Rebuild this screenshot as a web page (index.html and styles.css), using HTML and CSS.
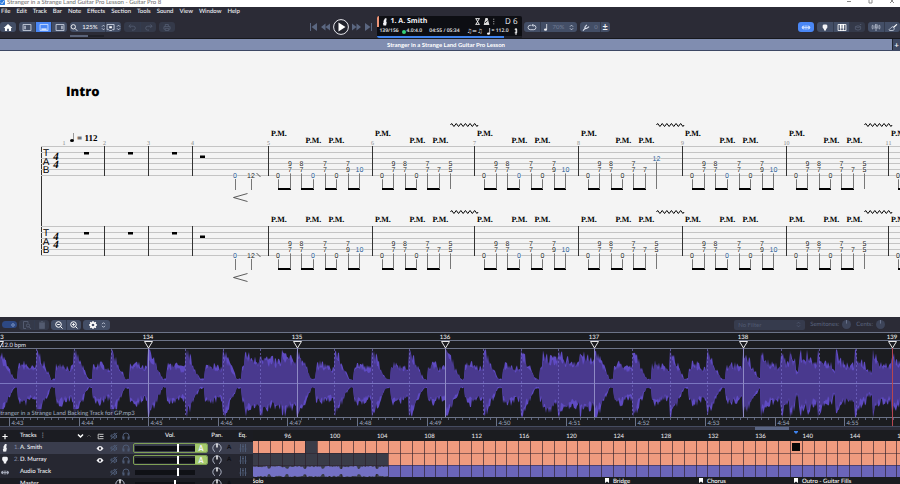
FILE: index.html
```html
<!DOCTYPE html>
<html lang="en">
<head>
<meta charset="utf-8">
<title>Stranger in a Strange Land Guitar Pro Lesson - Guitar Pro 8</title>
<link rel="stylesheet" href="styles.css">
</head>
<body>
<svg class="defs" aria-hidden="true">
  <symbol id="updown" viewBox="0 0 6 8"><path d="M1.200 3 3 1.200 4.800 3M1.200 5 3 6.800 4.800 5" fill="none" stroke="currentColor"/></symbol>
  <symbol id="mute" viewBox="0 0 8 8"><path d="M1 3h1.600L5 1v6L2.600 5H1zM.8 7.400 7 .8M6.500 3v3" fill="none" stroke="currentColor"/></symbol>
  <symbol id="phones" viewBox="0 0 8 8"><path d="M1 6V4a3 3 0 0 1 6 0v2" fill="none" stroke="currentColor"/><path d="M.5 4.500h2v3h-2zM5.500 4.500h2v3h-2z" fill="currentColor"/></symbol>
  <symbol id="eye" viewBox="0 0 8 8"><path d="M0 4q4-5.500 8 0-4 5.500-8 0z" fill="currentColor"/><circle cx="4" cy="4" r="1.300" fill="#2b2b36"/></symbol>
  <symbol id="knob" viewBox="0 0 10 10"><path d="M3 8.700A4.200 4.200 0 1 1 7 8.700" fill="none" stroke="currentColor"/><path d="M5 .5v4" stroke="#fff" stroke-width="1.400"/></symbol>
  <symbol id="eq" viewBox="0 0 8 8"><path d="M1.500 0v8M4 0v8M6.500 0v8M.5 5h2M3 2.500h2M5.500 5h2" fill="none" stroke="currentColor"/></symbol>
  <symbol id="guitar" viewBox="0 0 8 10"><path d="M4 0h2v2L5.500 4l.8 1.500L5.500 9.500 2 9.800 1.300 7l.9-1.500L2 3.500z" fill="currentColor"/></symbol>
  <symbol id="pick" viewBox="0 0 8 10"><path d="M2 .8h4L7.500 2v3L5.500 7.500V9.300h-3V7.500L.5 5V2z" fill="currentColor"/></symbol>
  <symbol id="wave" viewBox="0 0 10 8"><path d="M0 4l2-2v4zM10 4 8 2v4zM2 4h6M4 1.500v5M6 1.500v5" fill="currentColor" stroke="currentColor" stroke-width=".9"/></symbol>
  <symbol id="note" viewBox="0 0 6 9"><path d="M4.500 0v7" stroke="currentColor"/><ellipse cx="3" cy="7.300" rx="2" ry="1.400" fill="currentColor"/></symbol>
</svg>

<div class="titlebar">
  <svg class="app-icon" viewBox="0 0 6 6"><rect width="6" height="6" rx="1" fill="#2f7de0"/><path d="M1 3l1.500 1.500L5 1" stroke="#fff" fill="none"/></svg>
  <span>Stranger in a Strange Land Guitar Pro Lesson - Guitar Pro 8</span>
  <svg class="window-buttons" viewBox="0 0 48 6"><path d="M0 1.500h4M22 0v3h3V0M43 3l4-4M47 3l-4-4" fill="none" stroke="#8a8a8a"/></svg>
</div>

<header class="top">
  <nav class="menu">
    <a href="#">File</a><a href="#">Edit</a><a href="#">Track</a><a href="#">Bar</a><a href="#">Note</a><a href="#">Effects</a><a href="#">Section</a><a href="#">Tools</a><a href="#">Sound</a><a href="#">View</a><a href="#">Window</a><a href="#">Help</a>
  </nav>
  <div class="toolbar">
    <div class="side">
      <div class="group"><button class="home" aria-label="Home"><svg viewBox="0 0 10 8"><path d="M5 0 10 4.500H8.500V8H6V5.500H4V8H1.500V4.500H0z" fill="#fff"/></svg></button></div>
      <div class="group">
        <button aria-label="Left panel"><svg viewBox="0 0 10 8"><path d="M.5 .5h9v7h-9z" fill="none" stroke="#cfd6e4"/><path d="M2 2h1.500v4H2z" fill="#cfd6e4"/></svg></button>
        <button class="on" aria-label="Bottom panel"><svg viewBox="0 0 10 8"><path d="M.5 .5h9v7h-9z" fill="none" stroke="#cfe0ff"/><path d="M2 5h6v1.500H2z" fill="#fff"/></svg></button>
        <button aria-label="Right panel"><svg viewBox="0 0 10 8"><path d="M.5 .5h9v7h-9z" fill="none" stroke="#cfd6e4"/><path d="M6.500 2H8v4H6.500z" fill="#cfd6e4"/></svg></button>
      </div>
      <div class="zoom">
        <div class="group">
          <button class="zoom-value"><svg viewBox="0 0 8 8"><circle cx="3.200" cy="3.200" r="2.500" fill="none" stroke="#fff"/><path d="m5 5 2.700 2.700" stroke="#fff"/></svg>125%<svg class="arrows"><use href="#updown"/></svg></button>
          <button aria-label="Display mode"><svg viewBox="0 0 10 8"><path d="M2.500 6.500H.5v-6h8v6h-2M3 7.500h3" fill="none" stroke="#cfd6e4"/><path d="M3 2.500h3v2.300H3z" fill="#fff"/></svg><svg class="arrows"><use href="#updown"/></svg></button>
        </div>
        <progress value="54" max="100" aria-label="Loading"></progress>
      </div>
      <div class="group off">
        <button aria-label="Undo"><svg viewBox="0 0 10 8"><path d="M3.500 .5 1.500 2.500l2 2M1.500 2.500h5a2.200 2.200 0 0 1 0 4.500H5" fill="none" stroke="currentColor"/></svg></button>
        <button aria-label="Redo"><svg viewBox="0 0 10 8"><path d="m6.500 .5 2 2-2 2M8.500 2.500h-5a2.200 2.200 0 0 0 0 4.500H5" fill="none" stroke="currentColor"/></svg></button>
      </div>
      <div class="group off"><button aria-label="Print"><svg viewBox="0 0 10 8"><path d="M3 3V.5h3.500V3M2.500 6h-1V3h7v3h-1M3 5h4v2.500H3z" fill="none" stroke="currentColor"/></svg></button></div>
      <div class="transport">
        <button aria-label="First bar"><svg viewBox="0 0 8 8"><path d="M.5 0v8" stroke="currentColor"/><path d="M7 0v8L1.500 4z" fill="currentColor"/></svg></button>
        <button aria-label="Previous bar"><svg class="wide" viewBox="0 0 10 8"><path d="M5 0v8L0 4zM10 0v8L5 4z" fill="currentColor"/></svg></button>
        <button aria-label="Play"><svg class="play" viewBox="0 0 16 16"><circle cx="8" cy="8" r="7.400" fill="#22232d" stroke="#e8e8ee"/><path d="M5.500 3.500v9L12.500 8z" fill="#fff"/></svg></button>
        <button aria-label="Next bar"><svg class="wide" viewBox="0 0 10 8"><path d="M0 0v8l5-4zM5 0v8l5-4z" fill="currentColor"/></svg></button>
        <button aria-label="Last bar"><svg viewBox="0 0 8 8"><path d="M7.500 0v8" stroke="currentColor"/><path d="M1 0v8l5.500-4z" fill="currentColor"/></svg></button>
      </div>
    </div>

    <div class="display">
      <div class="now">
        <svg class="mini"><use href="#guitar"/></svg>
        <strong>1. A. Smith</strong>
        <svg class="flags" viewBox="0 0 24 8"><path d="M1 .7h5M1 7.300h5M1.700 1l3.500 6M5.300 1 1.800 7" fill="none" stroke="#fff"/><path d="M12.500 0h2.500L17 8h-6.500zM11.500 5h5" fill="#ddd"/><path d="M12 5.500 15 3" stroke="#111"/><path d="M22 .8v1.300M22 3.400v1.300M22 6v1.300" stroke="#bbb"/></svg>
        <span class="key">D 6</span>
      </div>
      <div class="status">
        <span>139/156</span><svg class="dot" viewBox="0 0 4 4"><circle cx="2" cy="2" r="2" fill="#35d07a"/></svg><span>4.0:4.0</span>
        <span class="time">04:55 / 05:34</span>
        <span class="music">♫=♫</span><svg class="mini-note"><use href="#note"/></svg><span>= 112.0</span>
        <svg class="fork" viewBox="0 0 4 8"><path d="M2 0v8M.5 1.500h2.500M.5 5.500H3M2.800 1.500v4" stroke="#fff" fill="none"/></svg>
      </div>
      <progress value="88" max="100" aria-label="Song position"></progress>
    </div>

    <div class="side options">
      <div class="group">
        <button aria-label="Loop"><svg viewBox="0 0 10 8"><path d="M4 1.500H3a2.500 2.500 0 0 0 0 5h4a2.500 2.500 0 0 0 0-5H5M6.500 0 5 1.500 6.500 3" fill="none" stroke="#dde2ee"/></svg></button>
        <button class="tempo"><svg class="mini-note"><use href="#note"/></svg><span class="dim">70%</span><svg class="arrows"><use href="#updown"/></svg></button>
      </div>
      <div class="group">
        <button class="tune"><svg viewBox="0 0 8 8"><path d="M.5 7.500 3 5M3 5q-1-1.500 2-4M3 5q1.500 1 4.500-2" fill="none" stroke="#dde2ee" stroke-width="1.300"/></svg><span class="dim">0</span></button>
        <button class="step" aria-label="Transpose">±</button>
      </div>
      <div class="group push"><button class="on" aria-label="Audio"><svg viewBox="0 0 10 8" class="pale"><use href="#wave"/></svg></button></div>
      <div class="group">
        <button aria-label="Fretboard"><svg viewBox="0 0 8 10"><use href="#pick"/></svg></button>
        <button aria-label="Keyboard"><svg viewBox="0 0 10 8"><path d="M.5 .5h9v7h-9zM3.500 4v4M6.500 4v4" fill="none" stroke="#fff"/><path d="M2.500 0h2v5h-2zM5.500 0h2v5h-2z" fill="#fff"/></svg></button>
        <button class="disabled" aria-label="Drums"><svg viewBox="0 0 10 8"><path d="M2 3v3q3 2 6 0V3q-3 2-6 0q3-2 6 0M7 1l2-1" fill="none" stroke="currentColor"/></svg></button>
      </div>
      <div class="group">
        <button aria-label="Tuner"><svg viewBox="0 0 10 8"><path d="M1 1q-1 2.500 0 5M2.700 1.500v4M7.300 1.500v4M9 1q1 2.500 0 5M4.500 0v4.500h1.500V0M5 4.500V8" fill="none" stroke="#cfd6e4" stroke-width=".8"/></svg></button>
        <button aria-label="Guitar"><svg viewBox="0 0 10 8"><path d="M9.500 .3 5.500 4" stroke="#fff" stroke-width="1.200"/><path d="M6 4q1.500 3-2 3.500-4 .5-3.500-1Q1.500 5.500 3 4q2-2 3 0z" fill="none" stroke="#cfd6e4"/></svg></button>
      </div>
    </div>
  </div>
</header>

<div class="tabs"><button class="tab">Stranger in a Strange Land Guitar Pro Lesson</button><button class="new-tab" aria-label="New tab">+</button></div>

<main class="score"><svg id="score" role="img" aria-label="Tablature"></svg></main>

<section class="audio">
  <div class="audio-bar">
    <input class="switch" type="checkbox" checked disabled aria-label="Audio track enabled">
    <div class="group off">
      <button aria-label="Replace audio"><svg viewBox="0 0 10 8"><path d="M4 7.500H1.500v-7H6V2" fill="none" stroke="currentColor"/><circle cx="6" cy="4.500" r="1.600" fill="none" stroke="currentColor"/><path d="M7 5.700 9 8" stroke="currentColor"/></svg></button>
      <button aria-label="Delete audio"><svg viewBox="0 0 10 8"><path d="M2.500 2h5v5.500h-5zM2 1.200h6M4 .5h2" fill="currentColor" stroke="currentColor" stroke-width=".7"/></svg></button>
    </div>
    <div class="group">
      <button aria-label="Zoom out"><svg viewBox="0 0 8 8"><circle cx="3.500" cy="3.500" r="2.800" fill="none" stroke="#fff"/><path d="m5.500 5.500 2 2M2.200 3.500h2.600" stroke="#fff"/></svg></button>
      <button aria-label="Zoom in"><svg viewBox="0 0 8 8"><circle cx="3.500" cy="3.500" r="2.800" fill="none" stroke="#fff"/><path d="m5.500 5.500 2 2M2.200 3.500h2.600M3.500 2.200v2.600" stroke="#fff"/></svg></button>
    </div>
    <div class="group">
      <button class="gear" aria-label="Audio settings"><svg viewBox="0 0 8 8"><circle cx="4" cy="4" r="2.200" fill="none" stroke="#fff" stroke-width="1.700"/><path d="M4 0v1.500M4 6.500V8M0 4h1.500M6.500 4H8M1.200 1.200l1 1M5.800 5.800l1 1M6.800 1.200l-1 1M2.200 5.800l-1 1" stroke="#fff" stroke-width="1.300"/></svg><svg class="arrows"><use href="#updown"/></svg></button>
    </div>
    <div class="filter"><select aria-label="Filter" disabled><option>No Filter</option></select><svg class="arrows"><use href="#updown"/></svg></div>
    <span class="faint">Semitones:</span><svg class="dial" viewBox="0 0 10 10"><circle cx="5" cy="5" r="5"/><path d="M5 0v4"/></svg>
    <span class="faint">Cents:</span><svg class="dial" viewBox="0 0 10 10"><circle cx="5" cy="5" r="5"/><path d="M5 0v4"/></svg>
  </div>
  <svg id="audio" role="img" aria-label="Audio waveform"></svg>
</section>

<section class="tracks">
  <div class="mixer">
    <div class="row head">
      <button class="c" aria-label="Add track"><svg viewBox="0 0 8 8"><path d="M4 1v6M1 4h6" stroke="#fff" stroke-width="1.300"/></svg></button><i></i>
      <span class="name">Tracks&nbsp; ⋮<svg class="chev" viewBox="0 0 16 6"><path d="m1 1.500 2.500 2.500L6 1.500" fill="none" stroke="#fff" stroke-width="1.500"/><path d="m10 4 2-2 2 2" fill="none" stroke="#555" stroke-width=".8"/></svg></span>
      <svg viewBox="0 0 8 8"><path d="M8 1.500H3M8 6.500H3M8 4H3.500M3 1Q1 1 2 4q-1 3 1 3" fill="none" stroke="#ddd"/></svg>
      <svg class="grey"><use href="#mute"/></svg><svg class="grey"><use href="#phones"/></svg>
      <span>Vol.</span><span>Pan.</span><i></i><span>Eq.</span>
    </div>
    <div class="row selected">
      <svg class="tall"><use href="#guitar"/></svg><span class="num">1.</span><span class="name">A. Smith</span>
      <svg><use href="#eye"/></svg><svg class="grey"><use href="#mute"/></svg><svg class="grey"><use href="#phones"/></svg>
      <span class="vol auto"><input type="range" value="72" aria-label="Volume, A. Smith"><button aria-label="Automate volume">A</button></span>
      <svg class="knob"><use href="#knob"/></svg><b>A</b><svg class="grey"><use href="#eq"/></svg>
    </div>
    <div class="row">
      <svg class="tall"><use href="#pick"/></svg><span class="num">2.</span><span class="name">D. Murray</span>
      <svg><use href="#eye"/></svg><svg class="grey"><use href="#mute"/></svg><svg class="grey"><use href="#phones"/></svg>
      <span class="vol auto"><input type="range" value="72" aria-label="Volume, D. Murray"><button aria-label="Automate volume">A</button></span>
      <svg class="knob"><use href="#knob"/></svg><b>A</b><svg class="grey"><use href="#eq"/></svg>
    </div>
    <div class="row">
      <svg class="pale-grey"><use href="#wave"/></svg><i></i><span class="name">Audio Track</span>
      <i></i><svg class="grey"><use href="#mute"/></svg><svg class="grey"><use href="#phones"/></svg>
      <span class="vol"><input type="range" value="72" aria-label="Volume, Audio Track"></span>
      <svg class="knob"><use href="#knob"/></svg><i></i><svg class="grey"><use href="#eq"/></svg>
    </div>
    <div class="row master">
      <i></i><i></i><span class="name">Master</span><i></i><svg class="knob span"><use href="#knob"/></svg>
      <span class="vol"><input type="range" value="67" aria-label="Volume, Master"></span>
      <svg class="knob"><use href="#knob"/></svg><b>A</b><i></i>
    </div>
  </div>
  <div class="timeline"><svg id="timeline" role="img" aria-label="Song timeline"></svg></div>
</section>
<script src="app.js"></script>
</body>
</html>
```
FILE: styles.css
```css
* { box-sizing: border-box; }
body {
  margin: 0;
  height: 100vh;
  display: flex;
  flex-direction: column;
  overflow: hidden;
  background: #1b1c22;
  color: #f2f2f6;
  font: 500 6px/8px Lato, "Open Sans", sans-serif;
  text-rendering: geometricPrecision;
}
.defs { position: absolute; width: 0; height: 0; }
svg { display: block; flex: none; }
button, input, select { font: inherit; color: inherit; margin: 0; padding: 0; border: 0; background: none; }

.titlebar {
  height: 7px;
  flex: none;
  display: flex;
  gap: 2px;
  overflow: hidden;
  background: #fff;
  color: #777;
  line-height: 5px;
}
.app-icon { width: 5px; height: 5px; }
.window-buttons { width: 48px; height: 6px; margin-left: auto; margin-right: 5px; }

.top { flex: none; background: #2b2b36; border-bottom: 1px solid #17181d; }
.menu { display: flex; gap: 6px; height: 9px; padding-left: 1px; line-height: 9px; }
.menu a { color: inherit; text-decoration: none; }
.toolbar { display: flex; height: 22px; align-items: center; }
.side { flex: 1; min-width: 0; display: flex; align-items: center; gap: 3px; }
.options { padding-left: 2px; }
.group { display: flex; border-radius: 3px; overflow: hidden; flex: none; }
.group button {
  display: flex;
  align-items: center;
  justify-content: center;
  gap: 3px;
  width: 16px;
  height: 10px;
  background: #434e66;
}
.group button + button { border-left: 1px solid #333b4e; }
.group svg { width: 10px; height: 7px; }
.group .arrows { width: 5px; height: 7px; color: #cfd6e4; }
.group .home { width: 16px; }
.group .on { background: #4a87f5; }
.group.off button, .group .disabled { background: #343949; color: #535b70; }
.group .zoom-value { width: 35px; }
.group .tempo { width: 37px; gap: 5px; }
.group .tune { width: 20px; }
.group .step { width: 10px; font-size: 9px; font-weight: 700; }
.dim { color: #6f7b94; }
.pale { color: #cfe0ff; }
.zoom { height: 22px; display: flex; flex-direction: column; gap: 3px; padding-top: 6px; }
.zoom button + button { gap: 0; }
progress { appearance: none; display: block; border: 0; height: 2px; width: 34px; background: #1f2028; }
progress::-webkit-progress-bar { background: #1f2028; }
progress::-webkit-progress-value { background: #5a6379; }
.transport { display: flex; align-items: center; gap: 3px; margin-left: auto; margin-right: 5px; color: #5b6781; }
.transport svg { width: 8px; height: 8px; }
.transport .wide { width: 9px; }
.transport .play { width: 16px; height: 16px; }
.push { margin-left: auto; }

.display { width: 145px; flex: none; height: 22px; background: #0d0e13; border-radius: 2px; overflow: hidden; }
.now { display: flex; align-items: center; gap: 3px; height: 11px; padding-left: 3px; border-left: 2px solid #ee9578; }
.now strong { font: 700 7px/11px "Open Sans", sans-serif; }
.mini { width: 6px; height: 8px; }
.flags { width: 24px; height: 7px; margin-left: auto; }
.key { font: 400 8px/11px "Open Sans", sans-serif; margin: 0 4px 0 5px; }
.status { display: flex; align-items: center; height: 9px; padding: 0 4px 0 3px; gap: 1px; font: 600 5px/9px "Open Sans", sans-serif; }
.dot { width: 4px; height: 4px; margin-left: 2px; }
.time { margin: 0 auto; }
.music { font: 6px/9px "DejaVu Sans", sans-serif; margin-right: 2px; }
.mini-note, .group .mini-note { width: 5px; height: 7px; }
.fork { width: 4px; height: 7px; margin-left: 4px; }
.display progress { width: 100%; }
.display progress::-webkit-progress-value { background: #3f83ee; }

.tabs { flex: none; height: 12px; display: flex; gap: 1px; background: #1f2430; border-bottom: 1px solid #3c4763; }
.tab { flex: 1; background: #808db0; font-weight: 700; line-height: 11px; color: #fff; }
.new-tab { width: 7px; background: #3f4963; font-size: 8px; line-height: 10px; font-weight: 700; }

.score { flex: 1; min-height: 0; background: #f4f4f4; color: #000; overflow: hidden; }
#score { width: 100%; height: 266px; }
#score .line { stroke: #c4c4c4; }
#score .bar { stroke: #333; }
#score .stem { stroke: #777; }
#score .beam { stroke: #000; stroke-width: 2; }
#score .fret { font: 7px "Liberation Sans", sans-serif; text-anchor: middle; paint-order: stroke; stroke: #f4f4f4; stroke-width: 1px; fill: #222; }
#score .alt { fill: #1d5a96; }
#score .pm { font: bold 8px "Liberation Serif", serif; }
#score .number { font: 6px "Liberation Serif", serif; text-anchor: middle; fill: #888; }
#score .clef { font: 10px "Liberation Sans", sans-serif; text-anchor: middle; }
#score .meter { font: italic bold 11px "Liberation Serif", serif; text-anchor: middle; }
#score .title { font: 800 13px "Open Sans", sans-serif; }
#score .tempo-mark { font: bold 9px "Liberation Serif", serif; }
#score .thin { fill: none; stroke: #333; stroke-width: .8; }

.audio { flex: none; background: #1b1c20; }
.audio-bar { height: 15px; display: flex; align-items: center; gap: 2px; padding: 0 14px 0 2px; background: #2b2b36; }
.switch { appearance: none; width: 15px; height: 7px; border-radius: 4px; background: radial-gradient(circle at 11px 4px, #5b74a8 2px, #2d4883 2px); }
.audio-bar .group button { width: 15px; }
.audio-bar .group .gear { width: 27px; gap: 3px; }
.audio-bar .group svg { height: 8px; }
.filter { display: flex; align-items: center; width: 71px; height: 10px; margin-left: auto; margin-right: 3px; padding: 0 4px; border-radius: 2px; background: #363b4d; color: #4f5870; }
.filter select { appearance: none; flex: 1; min-width: 0; opacity: 1; }
.filter .arrows { width: 5px; height: 7px; }
.faint { color: #566079; }
.dial { width: 9px; height: 9px; fill: #3d4459; stroke: #6c7690; margin: 0 1px; }
.dial circle { stroke: none; }
.dial + .faint { margin-left: 2px; }
#audio { width: 100%; height: 98px; }
#audio .bar-text { fill: #f0f0f0; text-anchor: middle; }
#audio .soft { fill: #9aa3b8; }

.tracks { flex: none; height: 54px; display: flex; overflow: hidden; }
.mixer { flex: none; width: 253px; }
.row {
  display: grid;
  grid-template-columns: 10px 10px 72px 16px 12px 12px 76px 18px 6px 21px;
  align-items: center;
  justify-items: center;
  height: 12px;
  background: #262731;
}
.row svg { width: 8px; height: 7px; }
.row .tall { height: 8px; }
.row .knob { width: 10px; height: 10px; color: #aeb4c4; }
.row .span { grid-column: span 2; }
.row .grey { width: 8px; height: 8px; color: #4d5a74; }
.row .pale-grey { color: #b4bac8; }
.row .name { justify-self: stretch; display: flex; align-items: center; }
.row .name .chev { width: 16px; height: 6px; margin-left: auto; margin-right: -1px; }
.row b { color: #0e0f14; font-weight: 900; }
.head, .master { background: #1b1c22; }
.selected { background: #3a3d4d; }
.num { color: #8088a0; justify-self: end; margin-right: 1px; }
.vol { display: flex; align-items: center; justify-self: start; margin-left: 1px; width: 75px; height: 10px; padding-left: 2px; }
.auto { border: 1px solid #7fa055; border-radius: 2px; padding-left: 1px; justify-content: space-between; overflow: hidden; }
.vol button { width: 12px; height: 10px; background: #a3c96c; font-size: 7px; font-weight: 900; line-height: 8px; }
.vol input { appearance: none; width: 60px; height: 8px; background: linear-gradient(#101116, #101116) 0 50% / 100% 5px no-repeat; }
.vol input::-webkit-slider-thumb { appearance: none; width: 2px; height: 8px; background: #fff; }
.timeline { flex: 1; min-width: 0; background: #1b1c20; }
#timeline { width: 100%; height: 54px; }
#timeline .bar-text { fill: #e6e6ea; text-anchor: middle; }
```
FILE: app.js
```js
const NS = 'http://www.w3.org/2000/svg';
function add(parent, tag, attrs, text) {
  const el = document.createElementNS(NS, tag);
  for (const k in attrs) el.setAttribute(k, attrs[k]);
  if (text !== undefined) el.textContent = text;
  parent.appendChild(el);
  return el;
}

// Repeatable noise so the waveform looks the same on each load.
let seed = 7;
function rand() {
  seed = (seed * 16807) % 2147483647;
  return seed / 2147483647;
}

function drawScore() {
  const s = document.getElementById('score');
  const bars = [268.5, 372.5, 474.5, 578.5, 682.5, 786.5, 888.5];
  const fullBar = [9.5, 21.5, 33, 44.5, 56.5, 68, 79.5, 91];
  const heldBar = [9.5, 21, 32.5, 44, 55, 66.5, 78];
  add(s, 'text', { x: 66, y: 45, class: 'title' }, 'Intro');
  add(s, 'path', { d: 'M73.500 82v7', stroke: '#999' });
  add(s, 'ellipse', { cx: 72, cy: 89.5, rx: 2, ry: 1.5 });
  add(s, 'text', { x: 77, y: 90, class: 'tempo-mark' }, '= 112');
  add(s, 'path', { d: 'M41.500 95v110', class: 'bar' });

  [95, 175].forEach((top, system) => {
    const g = add(s, 'g', { transform: `translate(0 ${top})` });
    for (let i = 0; i < 6; i++) {
      const y = Math.round(i * 5.8) + 0.5;
      add(g, 'line', { x1: 41, x2: '100%', y1: y, y2: y, class: 'line' });
    }
    'TAB'.split('').forEach((c, i) => add(g, 'text', { x: 46, y: 10 + i * 8.5, class: 'clef' }, c));
    add(g, 'text', { x: 56, y: 14, class: 'meter' }, '4');
    add(g, 'text', { x: 56, y: 22, class: 'meter' }, '4');
    [104.5, 148.5, 192.5].concat(bars).forEach((x, i) => {
      add(g, 'path', { d: `M${x} 0v30`, class: 'bar' });
      if (!system) add(g, 'text', { x, y: -1, class: 'number' }, i + 2);
    });
    if (!system) add(g, 'text', { x: 64, y: -1, class: 'number' }, 1);
    [84, 128, 172].forEach(x => add(g, 'rect', { x, y: 6, width: 5, height: 2.5 }));
    add(g, 'rect', { x: 200, y: 9.5, width: 5, height: 2.5 });

    const fret = (x, string, n, cls) =>
      add(g, 'text', { x, y: string * 5.85 + 2.8, class: 'fret ' + (cls || '') }, n);
    fret(235, 5, 0, 'alt');
    fret(251, 5, 12);
    add(g, 'path', { d: 'M235.500 33v11M251.500 33v11', class: 'stem' });
    add(g, 'path', { d: 'M256.500 27l4 4M247.500 47.500l-14 4 14 4', class: 'thin' });

    bars.forEach((bx, b) => {
      const held = b % 2 === 1;
      const steps = held ? heldBar : fullBar;
      [2.5, 37, 60].forEach((dx, i) => {
        if (bx + dx > 905) return;
        add(g, 'text', { x: bx + dx, y: system ? -4 : i ? -3 : -10, class: 'pm' }, 'P.M.');
      });
      steps.forEach((dx, i) => {
        const x = bx + dx;
        if (x > 905) return;
        let low = 4;
        if (i === 0 || i === 3 || (i === 5 && !held)) { fret(x, 5, 0, !held && i === 3 ? 'alt' : ''); low = 5; }
        else if (i === 5) fret(x, 4, 7);
        else if (i === 7) fret(x, 4, 10, 'alt');
        else if (i === 6 && b === 3 && !system) { fret(x, 2, 12, 'alt'); low = 2; }
        else {
          const pair = { 1: [9, 7], 2: [8, 7], 4: [7, 7], 6: held ? [5, 5] : [7, 9] }[i];
          fret(x, 3, pair[0]);
          fret(x, 4, pair[1]);
        }
        const px = Math.floor(x) + 0.5;
        add(g, 'path', { d: `M${px} ${low * 5.85 + 4}V43`, class: 'stem' });
        if (i % 2 === 0 && !(held && i === 6))
          add(g, 'path', { d: `M${px - 0.5} 43H${Math.floor(bx + steps[i + 1]) + 1}`, class: 'beam' });
      });
      if (held) {
        let d = `M${bx + 78} ${system ? -14 : -21}`;
        for (let k = 0; k < 6; k++) d += 'q1.150 -3 2.300 0t2.300 0';
        add(g, 'path', { d, fill: 'none', stroke: '#000' });
      }
    });
  });
}

// Envelope height (0..1) of the backing track at a given x.
function envelope(x) {
  if (x >= 743 && x < 761) return 0.85 * (1 - (x - 743) / 19) + 0.05;
  if (x >= 761) {
    const peaks = [761, 781, 790, 800, 807, 818, 836, 855, 873, 892];
    let p = 761;
    peaks.forEach(v => { if (x >= v) p = v; });
    const dip = (x > 866 && x < 873) || (x > 795 && x < 799) || (x > 832 && x < 836);
    return dip ? 0.35 : 0.5 + 0.45 * Math.exp(-(x - p) / 4);
  }
  const beat = Math.floor((x + 1) / 37.25);
  const p = x + 1 - beat * 37.25;
  const position = beat % 8;
  if (position === 7 || (position === 6 && p > 22)) return 0.62 + 0.3 * Math.exp(-(p > 22 ? p - 22 : p) / 6);
  if (p < 19) return Math.max(0.13, 1 - p / 17);
  return 0.5 + 0.06 * Math.sin((p - 20) / 3);
}

function wavePath(from, to, mid, height, env, jitter, step) {
  const up = [], down = [];
  for (let x = from; x <= to; x += step) {
    const e = env(x);
    const a = Math.min(1, e * (1 + (rand() - 0.5) * jitter));
    const b = Math.min(1, e * (1 + (rand() - 0.5) * jitter));
    up.push(`${x} ${(mid - a * height).toFixed(1)}`);
    down.unshift(`${x} ${(mid + b * height).toFixed(1)}`);
  }
  return 'M' + up.concat(down).join('L') + 'z';
}

function drawAudio() {
  const s = document.getElementById('audio');
  add(s, 'path', { d: wavePath(0, 900, 51.5, 34, envelope, 0.5, 1), fill: '#5f4bc2' });
  add(s, 'path', { d: wavePath(0, 900, 51.5, 34, x => envelope(x) * 0.86, 0.4, 1), fill: '#49398e' });
  [0.5, 8.5, 16.5, 85.5].forEach(y => add(s, 'line', { x1: 0, x2: '100%', y1: y, y2: y, stroke: '#6c7387' }));
  add(s, 'line', { x1: 0, x2: '100%', y1: 51.5, y2: 51.5, stroke: '#7a76c0' });
  for (let i = 1; i < 24; i++)
    if (i % 4) add(s, 'path', { d: `M${Math.round(i * 37.25 - 1) + 0.5} 17v68`, stroke: '#7468c4', 'stroke-dasharray': '2 2', 'stroke-width': 0.7 });
  [-1, 148, 297, 445, 594, 743, 892].forEach((x, i) => {
    const last = i === 6;
    add(s, 'path', { d: `M${x + 0.5} 16v${last ? 82 : 69}`, stroke: last ? '#b64650' : '#8e8ac4' });
    add(s, 'path', { d: `M${x - 3.5} 9.500h8l-4 6.500z`, fill: '#1b1c20', stroke: '#e8e8e8' });
    add(s, 'text', { x: i ? x : 2, y: 7, class: 'bar-text' }, i ? 133 + i : '3');
  });
  add(s, 'text', { x: 1, y: 15, fill: '#d8d8e0' }, '12.0 bpm');
  add(s, 'rect', { x: 0, y: 77, width: 129, height: 8, fill: '#1b1c20', opacity: 0.7 });
  add(s, 'text', { x: -3, y: 83, class: 'soft' }, 'Stranger in a Strange Land Backing Track for GP.mp3');
  for (let t = 0; t < 13; t++) {
    const x = Math.round(9 + t * 69.6) + 0.5;
    add(s, 'path', { d: `M${x} 86v9`, stroke: '#6c7387' });
    add(s, 'text', { x: x + 2, y: 93, class: 'soft' }, '4:' + (43 + t));
    for (let k = 1; k < 10; k++) add(s, 'path', { d: `M${Math.round(x + k * 6.96) + 0.5} 86v2`, stroke: '#59607a' });
  }
  add(s, 'rect', { x: 0, y: 94, width: '100%', height: 1, fill: '#454b60' });
  add(s, 'rect', { x: 0, y: 95, width: '100%', height: 3, fill: '#2b2b36' });
  add(s, 'rect', { x: 755, y: 95, width: 34, height: 3, fill: '#5a6583' });
}

function drawTimeline() {
  const s = document.getElementById('timeline');
  const w = 11.82;
  const start = n => 135.2 + (n - 105) * w;
  add(s, 'rect', { x: 0, y: 11, width: '100%', height: 36, fill: '#3a3c48' });
  for (let n = 93; n < 156; n++) {
    const x = Math.max(0, Math.round(start(n)));
    const width = Math.round(start(n + 1)) - x;
    const cell = (y, fill) => add(s, 'rect', { x, y, width, height: 12, fill });
    if (n !== 98) cell(11, '#ef9b7f');
    if (n >= 105) {
      cell(23, '#ef9b7f');
      cell(35, '#6b65b9');
    }
    if (x > 0) add(s, 'rect', { x, y: 11, width: 1, height: 36, fill: '#2b1e2a', opacity: 0.65 });
    if (n % 4 === 0) add(s, 'text', { x: start(n) + w / 2, y: 8, class: 'bar-text' }, n);
  }
  const env = x => (x % 18 > 14 ? 0.5 : 0.9);
  add(s, 'path', { d: wavePath(0, 135, 41.5, 5.5, env, 0.3, 1), fill: '#7370c4' });
  [23, 35].forEach(y => add(s, 'rect', { x: 0, y, width: '100%', height: 1, fill: '#2b1e2a', opacity: 0.5 }));
  add(s, 'rect', { x: 539, y: 13, width: 8, height: 8, fill: '#080808' });
  add(s, 'path', { d: 'M541 1h4v1l-2 2-2-2z', fill: '#3f83ee' });
  add(s, 'text', { x: -1, y: 53, fill: '#fff' }, 'Solo');
  [[352, 'Bridge'], [446, 'Chorus'], [541, 'Outro - Guitar Fills']].forEach(([x, name]) => {
    add(s, 'path', { d: `M${x} 48h4v5l-2-1.500-2 1.500z`, fill: '#fff' });
    add(s, 'text', { x: x + 8, y: 53, fill: '#fff' }, name);
  });
}

drawScore();
drawAudio();
drawTimeline();
```
